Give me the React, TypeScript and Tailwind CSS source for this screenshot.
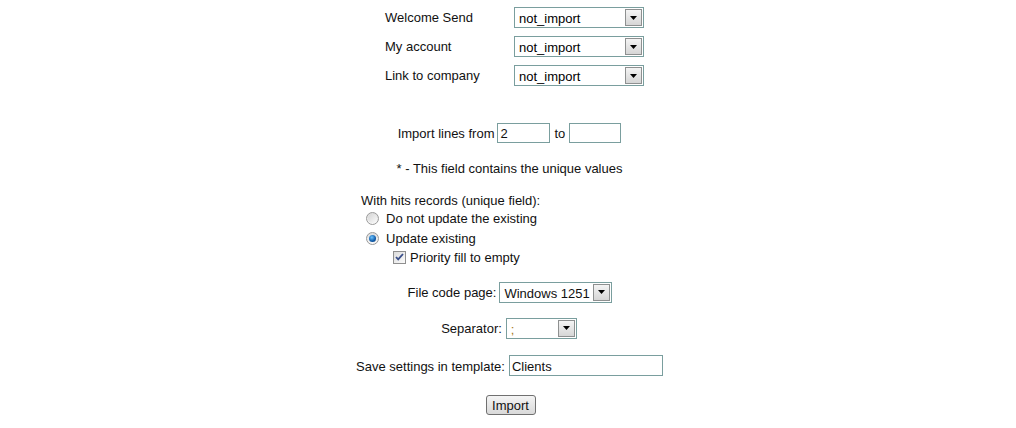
import React from "react";

const font = { fontFamily: '"Liberation Sans", Arial, sans-serif' };

function Arrow() {
  return (
    <div className="flex h-[17px] w-[17px] items-center justify-center border border-[#8e9090] bg-gradient-to-b from-[#f4f4f4] to-[#d6d6d6]">
      <svg width="7" height="4" viewBox="0 0 7 4">
        <path d="M0 0h7L3.5 4z" fill="#000" />
      </svg>
    </div>
  );
}

function FakeSelect({ value, w, textColor = "text-black" }: { value: string; w: string; textColor?: string }) {
  return (
    <div className={`flex h-[21px] ${w} items-center justify-between border border-[#7a9e9e] bg-white pl-[4px] pr-[1px]`}>
      <span className={`pt-[2px] text-[13px] leading-none ${textColor}`}>{value}</span>
      <Arrow />
    </div>
  );
}

function Radio({ checked }: { checked?: boolean }) {
  return (
    <div className="flex h-[13px] w-[13px] items-center justify-center rounded-full border border-[#9a9a9a] bg-gradient-to-b from-[#dcdcdc] to-[#fafafa]">
      {checked ? (
        <div className="h-[7px] w-[7px] rounded-full bg-[radial-gradient(circle_at_40%_35%,#6cc4ff,#0f5aa8_60%,#0a3a70)]" />
      ) : (
        <div className="h-[9px] w-[9px] rounded-full bg-gradient-to-br from-[#d5d5d5] to-[#fbfbfb]" />
      )}
    </div>
  );
}

function Checkbox() {
  return (
    <div className="flex h-[13px] w-[13px] items-center justify-center border border-[#8f8f8f] bg-gradient-to-br from-[#dcdcdc] to-[#fbfbfb]">
      <svg width="9" height="8" viewBox="0 0 9 8">
        <path d="M1 4l2.2 2.4L8 1" stroke="#3a4f8a" strokeWidth="1.8" fill="none" />
      </svg>
    </div>
  );
}

export default function App() {
  const rows = ["Welcome Send", "My account", "Link to company"];
  return (
    <div className="flex h-[428px] w-[1016px] flex-col items-center bg-white text-[13px] text-[#111]" style={font}>
      <div className="grid w-[272px] grid-cols-[142px_130px] pt-[3px]">
        {rows.map((r) => (
          <React.Fragment key={r}>
            <div className="flex h-[29px] items-center pl-[13px] pt-[1px]">{r}</div>
            <div className="flex h-[29px] items-center">
              <FakeSelect value="not_import" w="w-[131px]" />
            </div>
          </React.Fragment>
        ))}
      </div>

      <div className="mt-[33px] flex h-[20px] items-center pl-[3px]">
        <span className="pt-[2px]">Import lines from</span>
        <div className="ml-[3px] flex h-[20px] w-[53px] items-center border border-[#7a9e9e] pl-[2px] pt-[2px]">2</div>
        <span className="ml-[4px] pt-[2px]">to</span>
        <div className="ml-[4px] h-[20px] w-[52px] border border-[#7a9e9e]" />
      </div>

      <div className="mt-[17px] flex h-[16px] items-center pl-[3px] pt-[2px]">* - This field contains the unique values</div>

      <div className="mt-[16px] w-[294px]">
        <div className="flex h-[16px] items-center pt-[2px]">With hits records (unique field):</div>
        <div className="flex h-[20px] items-center pl-[5px]">
          <Radio />
          <span className="ml-[7px] pt-[2px]">Do not update the existing</span>
        </div>
        <div className="flex h-[20px] items-center pl-[5px]">
          <Radio checked />
          <span className="ml-[7px] pt-[2px]">Update existing</span>
        </div>
        <div className="flex h-[18px] items-center pl-[32px]">
          <Checkbox />
          <span className="ml-[4px] pt-[2px]">Priority fill to empty</span>
        </div>
      </div>

      <div className="mt-[16px] flex h-[20px] items-center pl-[4px]">
        <span className="pt-[2px]">File code page:</span>
        <div className="ml-[3px]">
          <div className="flex h-[21px] w-[113px] items-center justify-between border border-[#7a9e9e] bg-white pl-[4px] pr-[1px]">
            <span className="pt-[2px] leading-none">Windows 1251</span>
            <Arrow />
          </div>
        </div>
      </div>

      <div className="mt-[16px] flex h-[20px] items-center pl-[2px]">
        <span className="pt-[2px]">Separator:</span>
        <div className="ml-[4px]">
          <FakeSelect value=";" w="w-[71px]" textColor="text-[#a87818]" />
        </div>
      </div>

      <div className="mt-[17px] flex h-[21px] items-center pl-[3px]">
        <span className="pt-[2px]">Save settings in template:</span>
        <div className="ml-[4px] flex h-[21px] w-[154px] items-center border border-[#7a9e9e] pl-[2px] pt-[2px]">Clients</div>
      </div>

      <div className="ml-[6px] mt-[19px] flex h-[20px] w-[50px] items-center justify-center rounded-[3px] border border-[#707070] bg-gradient-to-b from-[#f4f4f4] to-[#d9d9d9] pr-[1px] pt-[1px]">
        Import
      </div>
    </div>
  );
}
